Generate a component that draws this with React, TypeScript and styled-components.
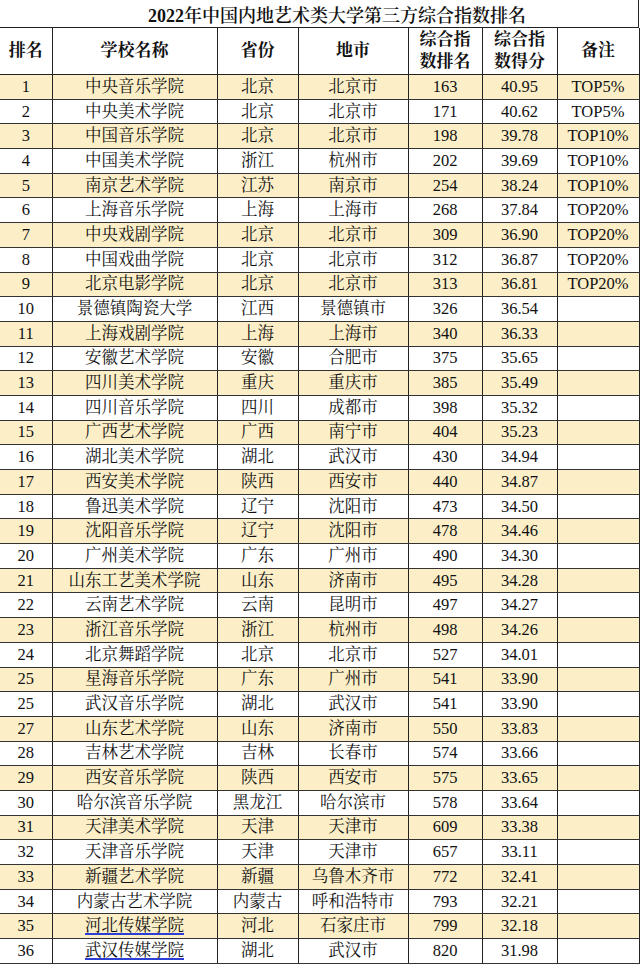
import React from "react";
import styled, { createGlobalStyle } from "styled-components";

const Global = createGlobalStyle`
  html, body { margin: 0; padding: 0; background: #ffffff; }
  body { font-family: "Liberation Serif", "Noto Serif CJK SC", "Noto Sans CJK SC", serif; color: #111; }
`;

const Page = styled.div`
  width: 640px;
  height: 967px;
  overflow: hidden;
  background: #fff;
`;

const Title = styled.div`
  height: 28px;
  box-sizing: border-box;
  width: 639px;
  border-right: 1.5px solid #222;
  border-bottom: 1.5px solid #222;
  display: flex;
  align-items: center;
  justify-content: center;
  padding-left: 36px;
  font-size: 18px;
  font-weight: 600;
  color: #111;
`;

const Table = styled.table`
  table-layout: fixed;
  border-collapse: collapse;
  width: 639px;
`;

const HeadCell = styled.th`
  height: 46px;
  padding: 0;
  font-weight: 700;
  font-size: 17px;
  line-height: 22px;
  text-align: center;
  vertical-align: middle;
  border-right: 1.5px solid #222;
  border-bottom: 1.5px solid #222;
  color: #111;
`;

const Row = styled.tr<{ $hl: boolean }>`
  height: 24.7px;
  background: ${(p) => (p.$hl ? "#fcefc8" : "#ffffff")};
`;

const Cell = styled.td`
  padding: 0;
  text-align: center;
  vertical-align: middle;
  white-space: nowrap;
  font-size: 16.5px;
  line-height: 20px;
  border-right: 1.5px solid #222;
  border-bottom: 1px solid #333;
  color: #111;
`;

const LinkText = styled.span`
  text-decoration: underline;
  text-decoration-color: #2b3fd6;
  text-underline-offset: 2px;
  text-decoration-thickness: 1.5px;
`;

type Item = [string, string, string, string, string, string, string];

const data: Item[] = [
  ["1", "中央音乐学院", "北京", "北京市", "163", "40.95", "TOP5%"],
  ["2", "中央美术学院", "北京", "北京市", "171", "40.62", "TOP5%"],
  ["3", "中国音乐学院", "北京", "北京市", "198", "39.78", "TOP10%"],
  ["4", "中国美术学院", "浙江", "杭州市", "202", "39.69", "TOP10%"],
  ["5", "南京艺术学院", "江苏", "南京市", "254", "38.24", "TOP10%"],
  ["6", "上海音乐学院", "上海", "上海市", "268", "37.84", "TOP20%"],
  ["7", "中央戏剧学院", "北京", "北京市", "309", "36.90", "TOP20%"],
  ["8", "中国戏曲学院", "北京", "北京市", "312", "36.87", "TOP20%"],
  ["9", "北京电影学院", "北京", "北京市", "313", "36.81", "TOP20%"],
  ["10", "景德镇陶瓷大学", "江西", "景德镇市", "326", "36.54", ""],
  ["11", "上海戏剧学院", "上海", "上海市", "340", "36.33", ""],
  ["12", "安徽艺术学院", "安徽", "合肥市", "375", "35.65", ""],
  ["13", "四川美术学院", "重庆", "重庆市", "385", "35.49", ""],
  ["14", "四川音乐学院", "四川", "成都市", "398", "35.32", ""],
  ["15", "广西艺术学院", "广西", "南宁市", "404", "35.23", ""],
  ["16", "湖北美术学院", "湖北", "武汉市", "430", "34.94", ""],
  ["17", "西安美术学院", "陕西", "西安市", "440", "34.87", ""],
  ["18", "鲁迅美术学院", "辽宁", "沈阳市", "473", "34.50", ""],
  ["19", "沈阳音乐学院", "辽宁", "沈阳市", "478", "34.46", ""],
  ["20", "广州美术学院", "广东", "广州市", "490", "34.30", ""],
  ["21", "山东工艺美术学院", "山东", "济南市", "495", "34.28", ""],
  ["22", "云南艺术学院", "云南", "昆明市", "497", "34.27", ""],
  ["23", "浙江音乐学院", "浙江", "杭州市", "498", "34.26", ""],
  ["24", "北京舞蹈学院", "北京", "北京市", "527", "34.01", ""],
  ["25", "星海音乐学院", "广东", "广州市", "541", "33.90", ""],
  ["25", "武汉音乐学院", "湖北", "武汉市", "541", "33.90", ""],
  ["27", "山东艺术学院", "山东", "济南市", "550", "33.83", ""],
  ["28", "吉林艺术学院", "吉林", "长春市", "574", "33.66", ""],
  ["29", "西安音乐学院", "陕西", "西安市", "575", "33.65", ""],
  ["30", "哈尔滨音乐学院", "黑龙江", "哈尔滨市", "578", "33.64", ""],
  ["31", "天津美术学院", "天津", "天津市", "609", "33.38", ""],
  ["32", "天津音乐学院", "天津", "天津市", "657", "33.11", ""],
  ["33", "新疆艺术学院", "新疆", "乌鲁木齐市", "772", "32.41", ""],
  ["34", "内蒙古艺术学院", "内蒙古", "呼和浩特市", "793", "32.21", ""],
  ["35", "河北传媒学院", "河北", "石家庄市", "799", "32.18", ""],
  ["36", "武汉传媒学院", "湖北", "武汉市", "820", "31.98", ""],
];

const widths = [52, 165, 81, 110, 74, 75, 82];

export default function App() {
  return (
    <Page>
      <Global />
      <Title>2022年中国内地艺术类大学第三方综合指数排名</Title>
      <Table>
        <colgroup>
          {widths.map((w, i) => (
            <col key={i} style={{ width: w }} />
          ))}
        </colgroup>
        <thead>
          <tr>
            <HeadCell>排名</HeadCell>
            <HeadCell>学校名称</HeadCell>
            <HeadCell>省份</HeadCell>
            <HeadCell>地市</HeadCell>
            <HeadCell>
              综合指
              <br />
              数排名
            </HeadCell>
            <HeadCell>
              综合指
              <br />
              数得分
            </HeadCell>
            <HeadCell>备注</HeadCell>
          </tr>
        </thead>
        <tbody>
          {data.map((r, i) => (
            <Row key={i} $hl={i % 2 === 0}>
              <Cell>{r[0]}</Cell>
              <Cell>{i >= 34 ? <LinkText>{r[1]}</LinkText> : r[1]}</Cell>
              <Cell>{r[2]}</Cell>
              <Cell>{r[3]}</Cell>
              <Cell>{r[4]}</Cell>
              <Cell>{r[5]}</Cell>
              <Cell>{r[6]}</Cell>
            </Row>
          ))}
        </tbody>
      </Table>
    </Page>
  );
}
